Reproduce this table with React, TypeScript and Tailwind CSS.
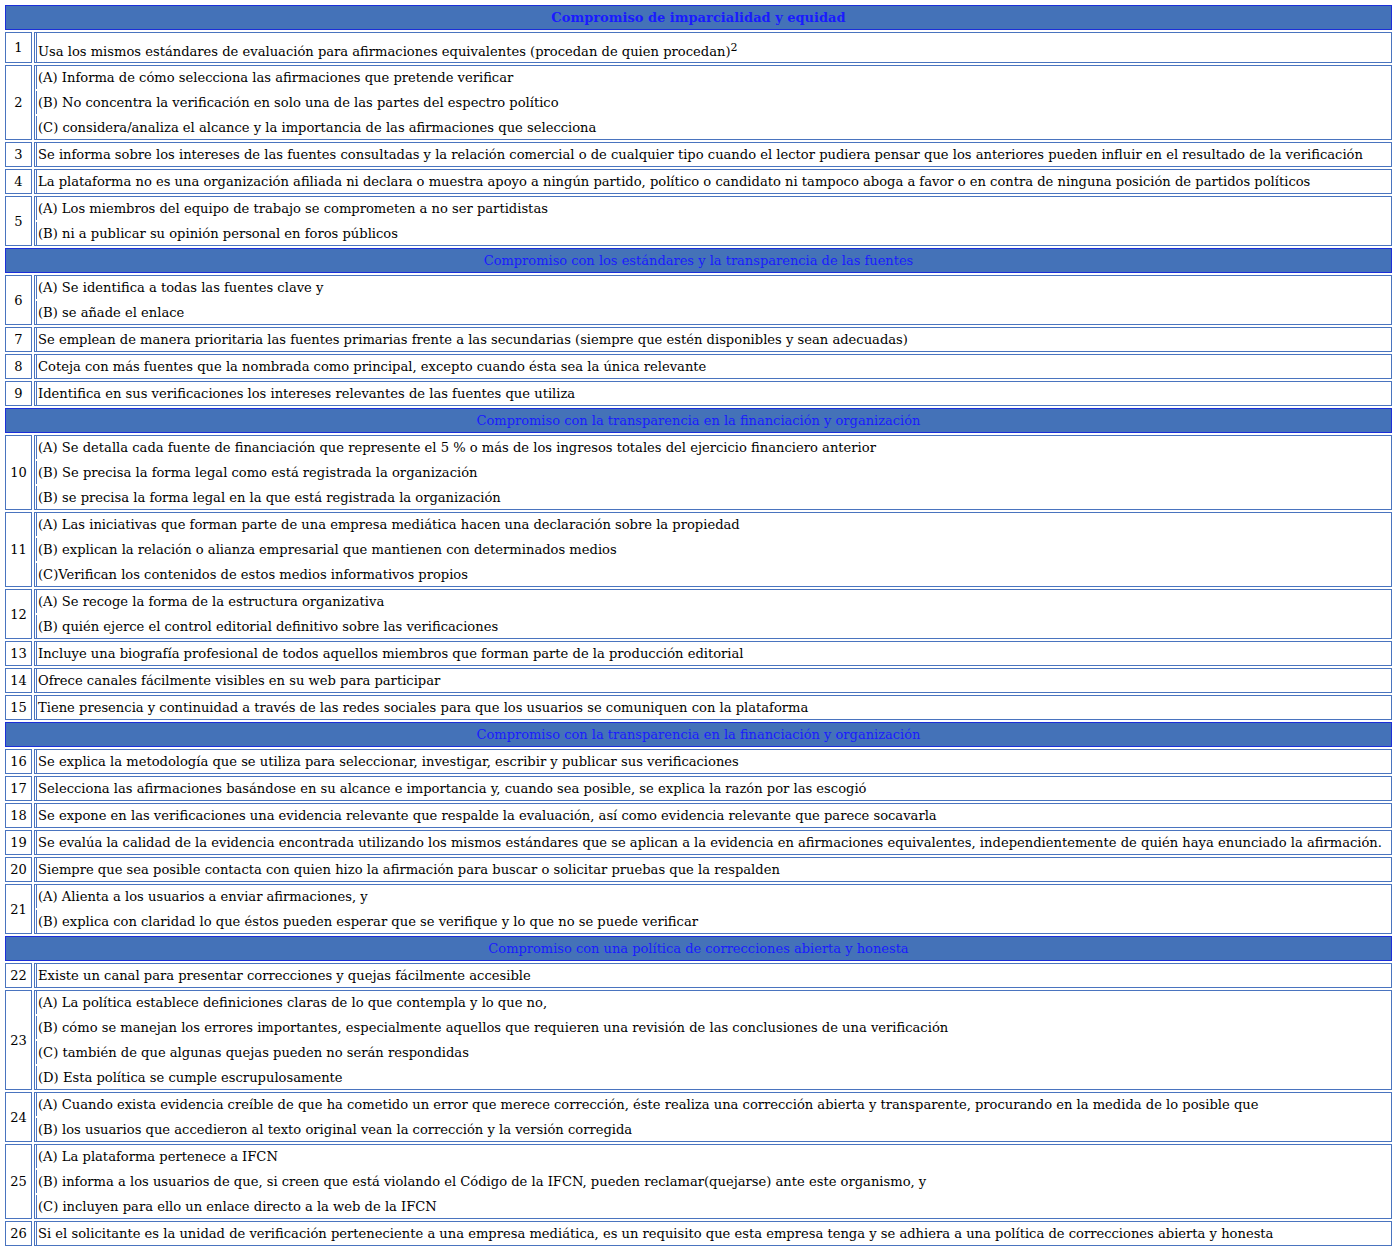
import React from "react";

type Row = { n: number; lines: string[]; sup?: string };
type Section = { title: string; bold?: boolean; rows: Row[] };

const sections: Section[] = [
  {
    title: "Compromiso de imparcialidad y equidad",
    bold: true,
    rows: [
      {
        n: 1,
        lines: [
          "Usa los mismos estándares de evaluación para afirmaciones equivalentes (procedan de quien procedan)",
        ],
        sup: "2",
      },
      {
        n: 2,
        lines: [
          "(A) Informa de cómo selecciona las afirmaciones que pretende verificar",
          "(B) No concentra la verificación en solo una de las partes del espectro político",
          "(C) considera/analiza el alcance y la importancia de las afirmaciones que selecciona",
        ],
      },
      {
        n: 3,
        lines: [
          "Se informa sobre los intereses de las fuentes consultadas y la relación comercial o de cualquier tipo cuando el lector pudiera pensar que los anteriores pueden influir en el resultado de la verificación",
        ],
      },
      {
        n: 4,
        lines: [
          "La plataforma no es una organización afiliada ni declara o muestra apoyo a ningún partido, político o candidato ni tampoco aboga a favor o en contra de ninguna posición de partidos políticos",
        ],
      },
      {
        n: 5,
        lines: [
          "(A) Los miembros del equipo de trabajo se comprometen a no ser partidistas",
          "(B) ni a publicar su opinión personal en foros públicos",
        ],
      },
    ],
  },
  {
    title: "Compromiso con los estándares y la transparencia de las fuentes",
    rows: [
      { n: 6, lines: ["(A) Se identifica a todas las fuentes clave y", "(B) se añade el enlace"] },
      {
        n: 7,
        lines: [
          "Se emplean de manera prioritaria las fuentes primarias frente a las secundarias (siempre que estén disponibles y sean adecuadas)",
        ],
      },
      {
        n: 8,
        lines: [
          "Coteja con más fuentes que la nombrada como principal, excepto cuando ésta sea la única relevante",
        ],
      },
      {
        n: 9,
        lines: ["Identifica en sus verificaciones los intereses relevantes de las fuentes que utiliza"],
      },
    ],
  },
  {
    title: "Compromiso con la transparencia en la financiación y organización",
    rows: [
      {
        n: 10,
        lines: [
          "(A) Se detalla cada fuente de financiación que represente el 5 % o más de los ingresos totales del ejercicio financiero anterior",
          "(B) Se precisa la forma legal como está registrada la organización",
          "(B) se precisa la forma legal en la que está registrada la organización",
        ],
      },
      {
        n: 11,
        lines: [
          "(A) Las iniciativas que forman parte de una empresa mediática hacen una declaración sobre la propiedad",
          "(B) explican la relación o alianza empresarial que mantienen con determinados medios",
          "(C)Verifican los contenidos de estos medios informativos propios",
        ],
      },
      {
        n: 12,
        lines: [
          "(A) Se recoge la forma de la estructura organizativa",
          "(B) quién ejerce el control editorial definitivo sobre las verificaciones",
        ],
      },
      {
        n: 13,
        lines: [
          "Incluye una biografía profesional de todos aquellos miembros que forman parte de la producción editorial",
        ],
      },
      { n: 14, lines: ["Ofrece canales fácilmente visibles en su web para participar"] },
      {
        n: 15,
        lines: [
          "Tiene presencia y continuidad a través de las redes sociales para que los usuarios se comuniquen con la plataforma",
        ],
      },
    ],
  },
  {
    title: "Compromiso con la transparencia en la financiación y organización",
    rows: [
      {
        n: 16,
        lines: [
          "Se explica la metodología que se utiliza para seleccionar, investigar, escribir y publicar sus verificaciones",
        ],
      },
      {
        n: 17,
        lines: [
          "Selecciona las afirmaciones basándose en su alcance e importancia y, cuando sea posible, se explica la razón por las escogió",
        ],
      },
      {
        n: 18,
        lines: [
          "Se expone en las verificaciones una evidencia relevante que respalde la evaluación, así como evidencia relevante que parece socavarla",
        ],
      },
      {
        n: 19,
        lines: [
          "Se evalúa la calidad de la evidencia encontrada utilizando los mismos estándares que se aplican a la evidencia en afirmaciones equivalentes, independientemente de quién haya enunciado la afirmación.",
        ],
      },
      {
        n: 20,
        lines: [
          "Siempre que sea posible contacta con quien hizo la afirmación para buscar o solicitar pruebas que la respalden",
        ],
      },
      {
        n: 21,
        lines: [
          "(A) Alienta a los usuarios a enviar afirmaciones, y",
          "(B) explica con claridad lo que éstos pueden esperar que se verifique y lo que no se puede verificar",
        ],
      },
    ],
  },
  {
    title: "Compromiso con una política de correcciones abierta y honesta",
    rows: [
      {
        n: 22,
        lines: ["Existe un canal para presentar correcciones y quejas fácilmente accesible"],
      },
      {
        n: 23,
        lines: [
          "(A) La política establece definiciones claras de lo que contempla y lo que no,",
          "(B) cómo se manejan los errores importantes, especialmente aquellos que requieren una revisión de las conclusiones de una verificación",
          "(C) también de que algunas quejas pueden no serán respondidas",
          "(D) Esta política se cumple escrupulosamente",
        ],
      },
      {
        n: 24,
        lines: [
          "(A) Cuando exista evidencia creíble de que ha cometido un error que merece corrección, éste realiza una corrección abierta y transparente, procurando en la medida de lo posible que",
          "(B) los usuarios que accedieron al texto original vean la corrección y la versión corregida",
        ],
      },
      {
        n: 25,
        lines: [
          "(A) La plataforma pertenece a IFCN",
          "(B) informa a los usuarios de que, si creen que está violando el Código de la IFCN, pueden reclamar(quejarse) ante este organismo, y",
          "(C) incluyen para ello un enlace directo a la web de la IFCN",
        ],
      },
      {
        n: 26,
        lines: [
          "Si el solicitante es la unidad de verificación perteneciente a una empresa mediática, es un requisito que esta empresa tenga y se adhiera a una política de correcciones abierta y honesta",
        ],
      },
    ],
  },
];

const SectionHeader = ({ title, bold }: { title: string; bold?: boolean }) => (
  <div
    className={`h-[25px] border border-[#1c2fd8] bg-[#4472b8] flex items-center justify-center text-[#1a1aff] text-[13px] ${
      bold ? "font-bold" : "font-normal"
    }`}
  >
    {title}
  </div>
);

const TableRow = ({ row }: { row: Row }) => (
  <div className="flex gap-[2px]">
    <div className="w-[27px] shrink-0 border border-[#4a74bf] flex items-center justify-center text-[13px]">
      {row.n}
    </div>
    <div className="flex-1 border border-[#4a74bf] flex flex-col gap-[2px]">
      {row.lines.map((line, i) => (
        <div
          key={i}
          className={`ml-[1px] pl-[1px] border-l border-[#4a74bf] flex items-center whitespace-nowrap ${
            row.sup ? "h-[29px] pt-[8px]" : "h-[23px]"
          }`}
        >
          {line}
          {row.sup && <sup className="text-[11px] relative -top-[4px]">{row.sup}</sup>}
        </div>
      ))}
    </div>
  </div>
);

export default function App() {
  return (
    <div
      className="bg-white min-h-screen p-[5px] text-black text-[13.1px] leading-none"
      style={{ fontFamily: '"DejaVu Serif", serif' }}
    >
      <div className="flex flex-col gap-[2px] w-[1387px]">
        {sections.map((s, si) => (
          <React.Fragment key={si}>
            <SectionHeader title={s.title} bold={s.bold} />
            {s.rows.map((r) => (
              <TableRow key={r.n} row={r} />
            ))}
          </React.Fragment>
        ))}
      </div>
    </div>
  );
}
